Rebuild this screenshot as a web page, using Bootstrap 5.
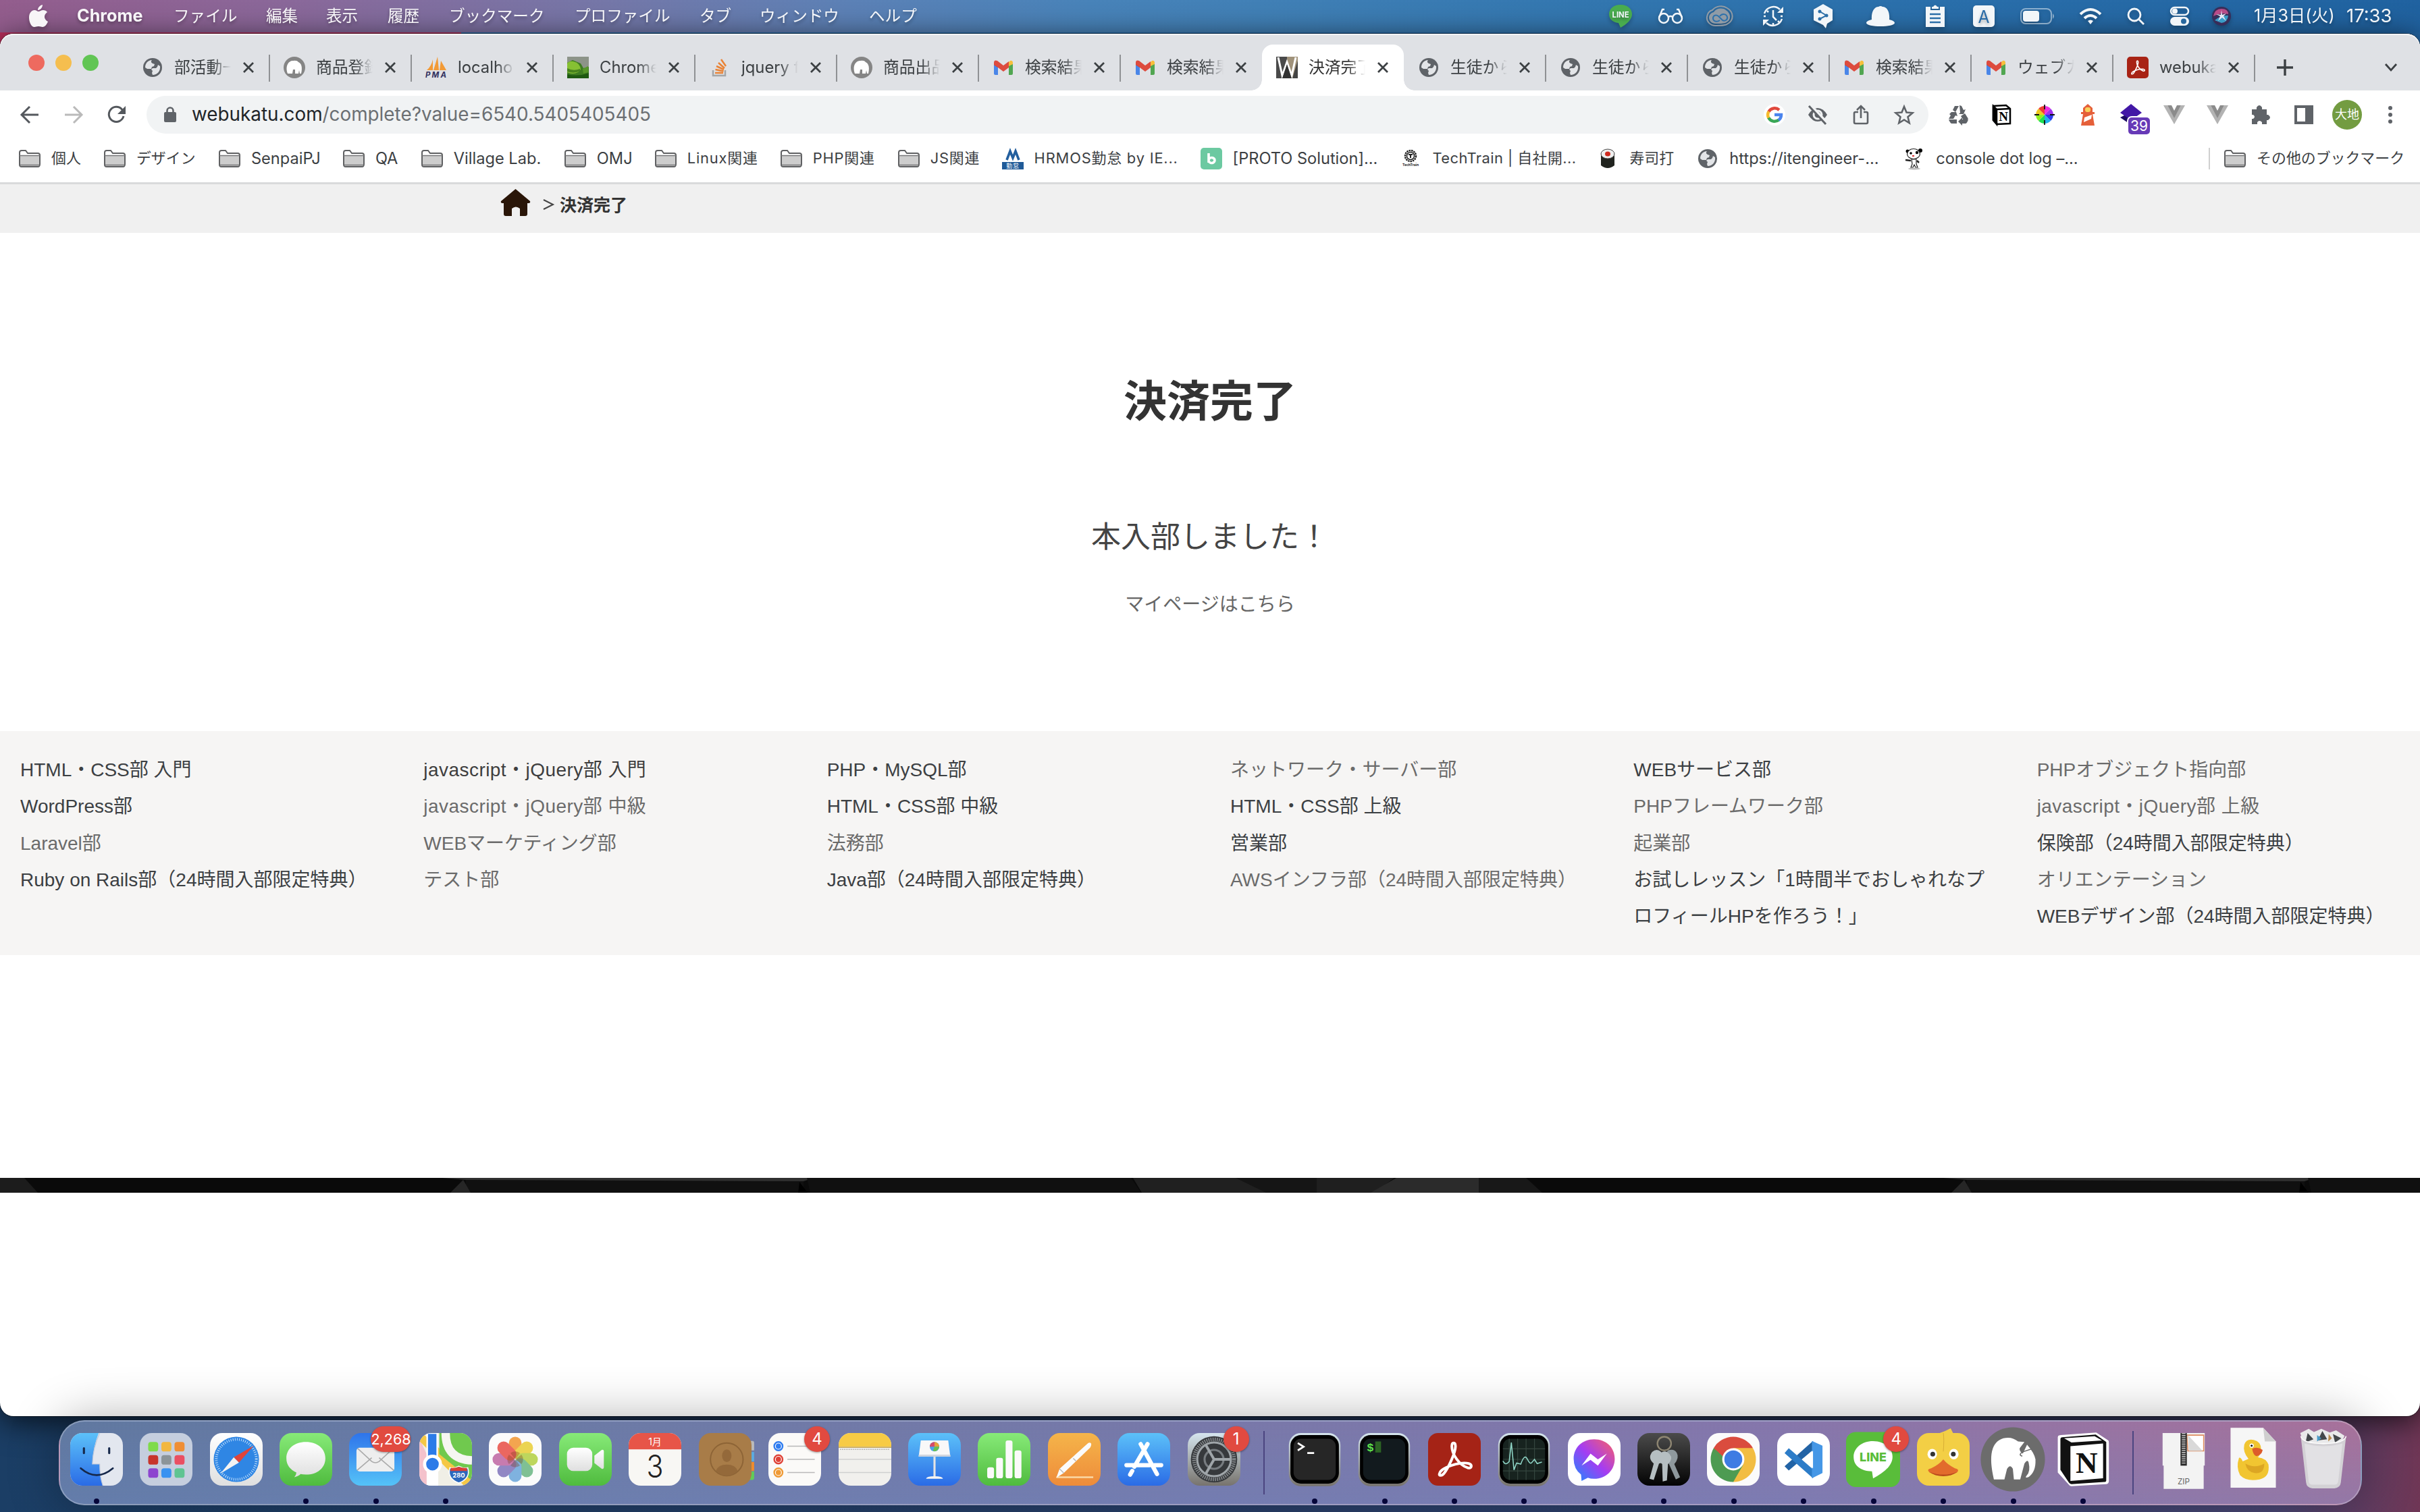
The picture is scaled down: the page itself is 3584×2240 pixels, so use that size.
<!DOCTYPE html>
<html lang="ja">
<head>
<meta charset="utf-8">
<title>決済完了</title>
<link href="https://cdn.jsdelivr.net/npm/bootstrap@5.3.0/dist/css/bootstrap.min.css" rel="stylesheet">
<style>
html,body{height:2240px;width:3584px;overflow:hidden}
body{font-family:Inter,"Noto Sans CJK JP",sans-serif;font-size:24px;line-height:1;color:#3c4043;
 background:linear-gradient(90deg,#b92f5c 0,#b92f5c 683px,#2d6ea8 683px,#2465a3) 0 0/100% 300px no-repeat,linear-gradient(90deg,#1b3e65,#26406b 40%,#31426f 75%,#4b4877 94%,#6f3655)}
svg{display:block;flex:none;overflow:visible}
.topmenu{height:48px;color:#fff;font-size:23.6px;background:linear-gradient(95deg,#935d8d 0,#8a689a 12%,#7577a8 25%,#5c81b6 35%,#4883b9 45%,#4180b6 52%,#3377b0 65%,#2a6fab 80%,#2062a0)}
.topmenu .lbl,.topmenu .ico{text-shadow:0 3px 5px #0005;white-space:nowrap;opacity:.94}
.topmenu .ico{filter:drop-shadow(0 3px 3px #0004)}
.m0{width:70px;padding-left:43px;margin-right:44px}
.m1{width:143px;font-weight:700;font-size:25.2px}.m2{width:137px}.m3{width:89px}.m4,.m5{width:91px}.m6{width:186px}.m7{width:185px}.m8{width:89px}.m9{width:162px}
.i2{margin-left:37px}.i3{margin-left:34px}.i4{margin-left:42px}.i5{margin-left:41px}.i6{margin-left:48px}.i7{margin-left:45px}.i8{margin-left:41px}.i9{margin-left:38px}.i10{margin-left:35px}.i11,.i12{margin-left:36px}.i13{margin-left:33px}.i14{margin-left:34px;width:137px;font-size:25.2px}.i15{width:109px;font-size:27.4px}
.win{height:2048px;margin-top:2px;border-radius:20px;background:#fff;box-shadow:0 0 0 1px #0006,0 8px 46px #000b}
.tabstrip{height:84px;background:#dfe1e5;border-radius:20px 20px 0 0;box-shadow:inset 0 2px #f3f4f5;padding:16px 0 0 42px}
.lights{width:147px;padding-top:15px;gap:16px}
.lights i{width:24px;height:24px;border-radius:50%}
.tb{width:210px;height:68px;padding-left:21px;position:relative;font-size:23.8px}
.tb+.tb:not(.act):not(.post)::before,.cap::before{content:"";position:absolute;left:-1px;top:15px;width:2px;height:40px;background:#8f9194}
.tb .t{width:84px;margin-left:16px;white-space:nowrap;line-height:36px;-webkit-mask-image:linear-gradient(90deg,#000 68%,transparent)}
.tb .x{margin-left:17px}
.act{background:#fff;border-radius:16px 16px 0 0;color:#333}
.act::after,.act::before{content:"";position:absolute;bottom:0;width:16px;height:16px}
.act::before{left:-16px;background:radial-gradient(circle at 0 0,transparent 15.5px,#fff 16px)}
.act::after{right:-16px;background:radial-gradient(circle at 100% 0,transparent 15.5px,#fff 16px)}
.cap{position:relative;width:245px;height:68px;padding:0 32px 0 32px}
.tools{height:72px}
.nav1{width:217px;padding-left:28px;gap:32px}
.omni{width:2639px;height:56px;border-radius:28px;background:#f1f3f4;padding:0 4px 0 26px;font-size:27.85px}
.omni .url{margin-left:23px}
.cell{width:64px}
.ext{padding-left:12px;width:728px}
.cnt{left:28px;top:20px;width:32px;height:25px;border-radius:5px;background:#673ab7;color:#fff;font-size:21px;line-height:25px;text-align:center;box-shadow:0 0 0 2px #fff}
.ava{width:44px;height:44px;border-radius:50%;background:#739c41;color:#fff;font-size:18px}
.marks{height:64px;padding-left:28px;padding-bottom:7px;font-size:21.9px}
.marks>div{gap:16px;white-space:nowrap}
.marks .la{font-size:23.6px}
.marks .mx{letter-spacing:.8px}
.marks .mx2{letter-spacing:.45px}
.b1{width:126px}.b2{width:170px}.b3{width:184px}.b4{width:116px}.b5{width:212px}.b6{width:134px}.b7{width:186px}.b8{width:174px}.b9{width:154px}.b10{width:294px}.b11{width:296px}.b12{width:292px}.b13{width:148px}.b14{width:306px}.b15{width:452px}
.b16{width:290px}
.bsep{width:2px;height:32px;background:#cfcfcf;margin-right:21px}
.page{border-top:3px solid #d9dadb;font-family:"Noto Sans CJK JP",sans-serif}
.crumb{height:72px;background:#f0f0f0;padding:0 0 13px 741px;color:#333;font-size:25px}
.crumb .home{margin-bottom:6px}
.crumb .gt{margin:0 8px 0 18px;width:17px}
.hero{height:738px;color:#333}
.hero h1{font-size:64px;font-weight:700;line-height:80px;margin:204px 0 0}
.hero p{font-size:44px;line-height:60px;color:#444;margin:133px 0 0}
.hero a{font-size:28px;line-height:40px;color:#666;margin-top:51px}
.clubs{height:332px;background:#f6f5f4;padding-top:31px;font-family:"Liberation Sans","Noto Sans CJK JP",sans-serif;font-size:28px;line-height:54.3px}
.clubs .col-2{padding:0 30px}
.clubs a{display:block;color:#3e3e3e;text-decoration:none}
.clubs a.off{color:#6b6b6b}
.clubs a.js{letter-spacing:.45px}
.band{margin-top:330px;height:22px}
.dock{height:126px;margin:6px 86px 0 86.5px;padding:17px 0 0 2.5px;border:2px solid #ffffff44;border-radius:38px;position:relative;
 background:linear-gradient(180deg,transparent,#6b86c055),linear-gradient(90deg,#6078a0,#6d7aa6 25%,#7878a9 50%,#8676ab 75%,#a8719a);box-shadow:0 0 76px #0005}
.app{width:103.45px;height:106px;position:relative}
.app.run::after{content:"";position:absolute;left:48px;bottom:1px;width:8px;height:8px;border-radius:50%;background:#06063a}
.dsep{width:45.7px}
.dsep i{display:block;width:2px;height:94px;margin:-3px auto 0;background:#4b4580}
.bdg{right:-13px;top:-10px;min-width:38px;height:38px;border-radius:19px;background:#e14a40;color:#fff;font-size:24px;line-height:38px;text-align:center;box-shadow:0 1px 3px #0006}
.bdg.wide{width:59px;right:-13px;font-size:21.5px}
</style>
<script src="https://cdn.jsdelivr.net/npm/bootstrap@5.3.0/dist/js/bootstrap.bundle.min.js"></script>
</head>
<body class="d-flex flex-column">
<svg width="0" height="0" class="position-absolute">
<defs>
<symbol id="globe" viewBox="0 0 32 32"><circle cx="16" cy="16" r="14" fill="#5f6368"/><path d="M15 5c-2 2-1 4 1 5l3 1-1 3-3 1-1 3-6 0-3-2C5 10 9 5 15 5z" fill="#e3e5e8"/><path d="M27 14c1 7-4 13-11 13l-1-3 1-3-2-2 2-2 5 0 2-2 1-3z" fill="#e3e5e8"/></symbol>
<symbol id="mamp" viewBox="0 0 32 32"><circle cx="16" cy="16" r="16" fill="#858585"/><path d="M6 25C2 14 7 6 14 6q6-1 8 2 7 3 4 17h-2l-1-5-1 5h-5v-6h-3l-1 6z" fill="#fff"/></symbol>
<symbol id="gm" viewBox="0 0 32 32"><path d="M2 8v17q0 2 2 2h4V13z" fill="#4a86e8"/><path d="M30 8v17q0 2-2 2h-4V13z" fill="#51a651"/><path d="M24 14V8l2-2q3-1 4 2v3z" fill="#f6bf3c"/><path d="M2 9v3l6 4V8z" fill="#b33026"/><path d="M2 9q0-5 5-3l9 7 8-6v9l-8 6-8-6-6-4z" fill="#dd4b3e"/></symbol>
<symbol id="fold" viewBox="0 0 32 26"><path d="M1 4q0-3 3-3h6l3 4h15q3 0 3 3v13q0 4-3 4H4q-3 0-3-3z" fill="#fff" stroke="#5f6062" stroke-width="2"/><path d="M2 9h28v13q0 2-2 2H4q-2 0-2-2z" fill="#cdcdcd"/><path d="M1 8.500h30M2 22.500h28" stroke="#77787a" stroke-width="1.500"/></symbol>
<symbol id="cls" viewBox="0 0 18 18"><path d="M2 2l14 14M16 2L2 16" stroke="#3c4043" stroke-width="2.800"/></symbol>
<symbol id="vue" viewBox="0 0 32 32"><path d="M0 2h6l10 18L26 2h6L16 30z" fill="#b3b3b3"/><path d="M6 2h6l4 8 4-8h6L16 21z" fill="#8b8b8b"/></symbol>
<symbol id="acro" viewBox="0 0 100 100"><path d="M22 76c-3 6 4 6 8 1C38 67 52 38 52 25c0-8-7-8-7 0 0 15 14 36 30 41 9 2 9-6 2-8-13-4-37 4-47 10-5 3-7 5-8 8z" fill="none" stroke="#fff" stroke-width="5"/></symbol>
<linearGradient id="gGreen" x2="0" y2="1"><stop stop-color="#87ea78"/><stop offset="1" stop-color="#4fbb3e"/></linearGradient>
<linearGradient id="gBlue" x2="0" y2="1"><stop stop-color="#5cc1f9"/><stop offset="1" stop-color="#2a6be6"/></linearGradient>
<linearGradient id="gMail" x2="0" y2="1"><stop stop-color="#2f74ea"/><stop offset="1" stop-color="#55c3f8"/></linearGradient>
<linearGradient id="gWhite" x2="0" y2="1"><stop stop-color="#fff"/><stop offset="1" stop-color="#dfdfdf"/></linearGradient>
<linearGradient id="gOr" x2="0" y2="1"><stop stop-color="#f5b54a"/><stop offset="1" stop-color="#ee8b3a"/></linearGradient>
<linearGradient id="gMsgr" x1="1" y1="0" x2="0" y2="1"><stop stop-color="#fb6164"/><stop offset=".5" stop-color="#a53cf2"/><stop offset="1" stop-color="#1a8bff"/></linearGradient>
<linearGradient id="gDark" x2="0" y2="1"><stop stop-color="#4b4b4b"/><stop offset="1" stop-color="#030303"/></linearGradient>
<linearGradient id="gRim" x2="0" y2="1"><stop stop-color="#d5e5ee"/><stop offset="1" stop-color="#77736d"/></linearGradient>
<clipPath id="sq"><rect width="100" height="100" rx="23"/></clipPath>
</defs></svg>

<header class="topmenu d-flex align-items-center flex-shrink-0">
 <div class="m0 ico"><svg width="28" height="34" viewBox="0 0 28 34"><path d="M20 0c0 4-3 8-7 8 0-4 3-7 7-8zM14 10c2 0 4-2 7-2 2 0 5 1 6 3-6 4-5 11 1 14-2 5-5 8-8 8-2 0-3-1-6-1s-4 1-6 1C3 33 0 25 0 19 0 12 4 8 8 8c3 0 4 2 6 2z" fill="#fff"/></svg></div>
 <div class="m1 lbl">Chrome</div><div class="m2 lbl">ファイル</div><div class="m3 lbl">編集</div><div class="m4 lbl">表示</div><div class="m5 lbl">履歴</div><div class="m6 lbl">ブックマーク</div><div class="m7 lbl">プロファイル</div><div class="m8 lbl">タブ</div><div class="m9 lbl">ウィンドウ</div><div class="lbl">ヘルプ</div>
 <div class="d-flex align-items-center ms-auto">
 <svg class="ico" width="36" height="34" viewBox="0 0 36 34"><path d="M18 34l-3-7C6 26 1 21 1 14 1 6 8 0 18 0s17 6 17 14c0 8-8 15-17 20z" fill="#4bb04a"/><text x="18" y="19" font-size="12" font-weight="700" fill="#fff" text-anchor="middle" textLength="25" lengthAdjust="spacingAndGlyphs">LINE</text></svg>
 <svg class="ico i2" width="38" height="24" viewBox="0 0 38 24" fill="none" stroke="#fff" stroke-width="2.500"><circle cx="9" cy="15" r="7"/><circle cx="29" cy="15" r="7"/><path d="M16 13q3-2 6 0M2 14L7 2h3M36 14L31 2h-3"/></svg>
 <svg class="ico i3" width="40" height="30" viewBox="0 0 40 30"><path d="M14 29C6 29 0 23 1 16 2 10 5 7 9 6c5-6 15-8 22-3 10 6 10 18 1 23-3 3-9 3-18 3z" fill="none" stroke="#979ea6" stroke-width="2"/><path d="M14 26C8 26 4 22 4 17c0-4 3-7 7-8 4-6 13-7 18-3 8 5 8 15 1 18-3 2-8 2-16 2z" fill="#979ea6"/><path d="M20 21c-4 3-10 2-10-3 0-4 4-6 8-3l6 6c4 2 8-1 7-5s-7-6-11-1" fill="none" stroke="#2e72ac" stroke-width="2"/></svg>
 <svg class="ico i4" width="34" height="34" viewBox="0 0 34 34" fill="none" stroke="#fff" stroke-width="2.500"><path d="M4 13A14 14 0 0 1 27 7M30 21A14 14 0 0 1 7 27M17 8v10l5 5"/><path d="M32 3v9h-9zM2 31v-9h9z" fill="#fff" stroke="none"/><path d="M3 17h3M28 17h3M17 27v3M8 9l2 2M24 24l2 2"/></svg>
 <svg class="ico i5" width="32" height="38" viewBox="0 0 32 38"><path d="M16 1l14 8v16l-8 5-2 7-4-5L2 25V9z" fill="#fff"/><path d="M11 12l10 6-10 5" stroke="#2d70a9" stroke-width="2" fill="none"/><circle cx="11" cy="12" r="2.500" fill="#2d70a9"/><circle cx="21" cy="18" r="2.500" fill="#2d70a9"/><circle cx="11" cy="23" r="2.500" fill="#2d70a9"/></svg>
 <svg class="ico i6" width="42" height="30" viewBox="0 0 42 30"><path d="M8 20C7 8 12 1 18 1q3-2 6 0c7 0 11 8 10 19 5 1 8 3 8 5 0 3-10 5-21 5S0 28 0 25c0-2 3-4 8-5z" fill="#fff"/></svg>
 <svg class="ico i7" width="30" height="34" viewBox="0 0 30 34"><path d="M1 3h7v5h14V3h7v30H1z" fill="#fff"/><path d="M10 3h2q3-5 6 0h2v3H10z" fill="#fff"/><path d="M7 14h16M7 20h16M7 26h16" stroke="#2d70a9" stroke-width="2.500"/></svg>
 <svg class="ico i8" width="32" height="32" viewBox="0 0 32 32"><rect width="32" height="32" rx="5" fill="#fff"/><text x="16" y="25.500" font-size="26" fill="#2a6ca8" text-anchor="middle" textLength="17" lengthAdjust="spacingAndGlyphs">A</text></svg>
 <svg class="ico i9" width="52" height="24" viewBox="0 0 52 24"><rect x="1" y="1" width="45" height="22" rx="7" fill="none" stroke="#fff" stroke-opacity=".5" stroke-width="2"/><rect x="4" y="4" width="24" height="16" rx="4" fill="#fff"/><path d="M48 8q4 4 0 8z" fill="#fff" opacity=".5"/></svg>
 <svg class="ico i10" width="34" height="25" viewBox="0 0 34 25" fill="none" stroke="#fff" stroke-width="4"><path d="M2 9Q17-5 32 9M8 15q9-8 18 0"/><path d="M17 24l-4-5q4-3 8 0z" fill="#fff" stroke="none"/></svg>
 <svg class="ico i11" width="28" height="26" viewBox="0 0 28 26" fill="none" stroke="#fff" stroke-width="2.800"><circle cx="12" cy="11" r="9"/><path d="M19 18l7 7"/></svg>
 <svg class="ico i12" width="30" height="28" viewBox="0 0 30 28"><rect x="2" y="1" width="26" height="11" rx="5.500" fill="none" stroke="#fff" stroke-width="2.500"/><circle cx="8" cy="6.500" r="4" fill="#fff"/><rect x="1" y="15" width="28" height="13" rx="6.500" fill="#fff"/><circle cx="21" cy="21.500" r="4" fill="#28689f"/></svg>
 <svg class="ico i13" width="28" height="28" viewBox="0 0 28 28"><circle cx="14" cy="14" r="14" fill="#3a2a55"/><path d="M2 14Q4 3 14 3t10 8Q14 8 2 14z" fill="#c24a87"/><path d="M4 20q9-8 20-7-1 10-10 11z" fill="#3c9fcb"/><path d="M14 5l1 7 6-2-4 4 4 7-6-5-6 5 3-7-6-3 7 1z" fill="#f2f0fb"/></svg>
 <div class="lbl i14">1月3日(火)</div><div class="lbl i15">17:33</div>
 </div>
</header>

<main class="win flex-shrink-0">
 <div class="tabstrip d-flex">
  <div class="lights d-flex"><i style="background:#ee6a5f"></i><i style="background:#f5be4f"></i><i style="background:#61c554"></i></div>
  <div class="tb d-flex align-items-center"><svg width="32" height="32"><use href="#globe"/></svg><span class="t">部活動一</span><svg class="x" width="18" height="18"><use href="#cls"/></svg></div>
  <div class="tb d-flex align-items-center"><svg width="32" height="32"><use href="#mamp"/></svg><span class="t">商品登録</span><svg class="x" width="18" height="18"><use href="#cls"/></svg></div>
  <div class="tb d-flex align-items-center"><svg width="32" height="32" viewBox="0 0 32 32"><path d="M2 20Q9 14 11 4v16zM12 20L18 0l2 20zM21 20l2-14 8 14z" fill="#f29a36"/><text x="0" y="31" font-size="11.500" font-weight="700" font-style="italic" fill="#33325f" textLength="31">PMA</text></svg><span class="t">localho</span><svg class="x" width="18" height="18"><use href="#cls"/></svg></div>
  <div class="tb d-flex align-items-center"><svg width="32" height="32" viewBox="0 0 32 32"><rect width="32" height="32" fill="#3e7d22"/><path d="M0 0h32v15l-8 2-4-7L8 5 0 9z" fill="#8d9489"/><path d="M0 10q3-4 9-3 10 2 11 12l-4 4q-8 4-16 0z" fill="#86c033"/><path d="M0 17q9 5 19 1v3q-9 5-19 1z" fill="#47821f"/><path d="M23 18l8-4v9l-7 2z" fill="#57972a"/><path d="M0 26q16 4 32-2v8H0z" fill="#1f5a12"/></svg><span class="t">Chrome</span><svg class="x" width="18" height="18"><use href="#cls"/></svg></div>
  <div class="tb d-flex align-items-center"><svg width="32" height="32" viewBox="0 0 32 32"><path d="M6 20v8h18v-8" fill="none" stroke="#a4a6a8" stroke-width="2.500"/><path d="M9 24h12M9.500 19l12 2.500M11 14l11 5M14 9l9 8M18 4l7 10" stroke="#e98336" stroke-width="2.500"/></svg><span class="t">jquery f</span><svg class="x" width="18" height="18"><use href="#cls"/></svg></div>
  <div class="tb d-flex align-items-center"><svg width="32" height="32"><use href="#mamp"/></svg><span class="t">商品出品</span><svg class="x" width="18" height="18"><use href="#cls"/></svg></div>
  <div class="tb d-flex align-items-center"><svg width="32" height="32"><use href="#gm"/></svg><span class="t">検索結果</span><svg class="x" width="18" height="18"><use href="#cls"/></svg></div>
  <div class="tb d-flex align-items-center"><svg width="32" height="32"><use href="#gm"/></svg><span class="t">検索結果</span><svg class="x" width="18" height="18"><use href="#cls"/></svg></div>
  <div class="tb act d-flex align-items-center"><svg width="32" height="32" viewBox="0 0 32 32"><path d="M0 0h16v32H0z" fill="#4a4a4a"/><path d="M16 0h16v32H16z" fill="#a0927a"/><path d="M24 32l8-26v26z" fill="#444"/><path d="M3 1l6 27 7-20 7 20 6-27" fill="none" stroke="#fff" stroke-width="3"/><path d="M16 11l7 21H9z" fill="#333"/></svg><span class="t">決済完了</span><svg class="x" width="18" height="18"><use href="#cls"/></svg></div>
  <div class="tb post d-flex align-items-center"><svg width="32" height="32"><use href="#globe"/></svg><span class="t">生徒から</span><svg class="x" width="18" height="18"><use href="#cls"/></svg></div>
  <div class="tb d-flex align-items-center"><svg width="32" height="32"><use href="#globe"/></svg><span class="t">生徒から</span><svg class="x" width="18" height="18"><use href="#cls"/></svg></div>
  <div class="tb d-flex align-items-center"><svg width="32" height="32"><use href="#globe"/></svg><span class="t">生徒から</span><svg class="x" width="18" height="18"><use href="#cls"/></svg></div>
  <div class="tb d-flex align-items-center"><svg width="32" height="32"><use href="#gm"/></svg><span class="t">検索結果</span><svg class="x" width="18" height="18"><use href="#cls"/></svg></div>
  <div class="tb d-flex align-items-center"><svg width="32" height="32"><use href="#gm"/></svg><span class="t">ウェブカ</span><svg class="x" width="18" height="18"><use href="#cls"/></svg></div>
  <div class="tb d-flex align-items-center"><svg width="32" height="32" viewBox="0 0 100 100"><rect width="100" height="100" rx="16" fill="#a82315"/><use href="#acro" width="100" height="100"/></svg><span class="t">webuka</span><svg class="x" width="18" height="18"><use href="#cls"/></svg></div>
  <div class="cap d-flex align-items-center justify-content-between"><svg width="26" height="26" viewBox="0 0 26 26"><path d="M13 1v24M1 13h24" stroke="#3c4043" stroke-width="3.400"/></svg><svg width="22" height="12" viewBox="0 0 22 12"><path d="M3 1l8 9 8-9" fill="none" stroke="#3c4043" stroke-width="2.800"/></svg></div>
 </div>

 <div class="tools d-flex align-items-center">
  <div class="nav1 d-flex align-items-center">
   <svg width="32" height="32" viewBox="0 0 32 32" fill="none" stroke="#54585d" stroke-width="3"><path d="M29 16H5M16 4L4 16l12 12"/></svg>
   <svg width="32" height="32" viewBox="0 0 32 32" fill="none" stroke="#bababa" stroke-width="3"><path d="M4 16h24M17 4l12 12-12 12"/></svg>
   <svg width="32" height="32" viewBox="0 0 32 32" fill="none" stroke="#54585d" stroke-width="3"><path d="M27 18A11 11 0 1 1 24.500 8l3 3"/><path d="M30 3v12H18z" fill="#54585d" stroke="none"/></svg>
  </div>
  <div class="omni d-flex align-items-center">
   <svg width="18" height="24" viewBox="0 0 18 24"><rect y="8" width="18" height="15" rx="2" fill="#5f6368"/><path d="M4.500 9V6a4.500 4.500 0 0 1 9 0v3" fill="none" stroke="#5f6368" stroke-width="2.600"/></svg>
   <span class="url"><span class="text-dark">webukatu.com</span><span style="color:#6b6f73">/complete?value=6540.5405405405</span></span>
   <div class="d-flex ms-auto">
    <div class="cell d-flex justify-content-center"><svg width="32" height="32" viewBox="0 0 32 32"><circle cx="16" cy="16" r="16" fill="#fff"/><g fill="none" stroke-width="4.500"><path d="M23 9A10 10 0 0 0 7.500 11.500" stroke="#e0483c"/><path d="M7.500 11A10 10 0 0 0 7.500 21" stroke="#f6bb2d"/><path d="M7.300 20.500A10 10 0 0 0 22.500 23.500" stroke="#3aa757"/><path d="M22 24Q26 21 26 16H16" stroke="#4a84ee"/></g></svg></div>
    <div class="cell d-flex justify-content-center"><svg width="32" height="32" viewBox="0 0 32 32"><path d="M2 16Q8 6 16 6t14 10Q24 26 16 26T2 16z" fill="#5f6368"/><circle cx="16" cy="16" r="6" fill="none" stroke="#f1f3f4" stroke-width="3"/><path d="M5 1l25 27" stroke="#f1f3f4" stroke-width="4"/><path d="M3 3l25 27" stroke="#5f6368" stroke-width="3"/></svg></div>
    <div class="cell d-flex justify-content-center"><svg width="32" height="32" viewBox="0 0 32 32" fill="none" stroke="#5f6368" stroke-width="2.600"><path d="M12 12H8q-2 0-2 2v13q0 2 2 2h16q2 0 2-2V14q0-2-2-2h-4M16 21V3M10 9l6-6 6 6"/></svg></div>
    <div class="cell d-flex justify-content-center"><svg width="32" height="32" viewBox="0 0 32 32"><path d="M16 4l3.500 8.500 9 .8-7 6 2.200 9L16 23.500 8.300 28.300l2.200-9-7-6 9-.8z" fill="none" stroke="#5f6368" stroke-width="2.600"/></svg></div>
   </div>
  </div>
  <div class="ext d-flex align-items-center">
   <div class="cell d-flex justify-content-center"><svg width="32" height="32" viewBox="0 0 32 32" fill="#5f6368"><path d="M11 3h6l-5 9-4-3zM18 2l3 1 3 6 3-1-3 7h-7l2-2zM6 12l7 0 2 6-3-1-3 5H2l3-5-2-2zM2 23h12v6H6q-2-1-4-6zM26 14l5 8-3 2h-4l-4-6zM16 26l6-6v3h9q-2 6-4 6h-5v3z"/></svg></div>
   <div class="cell d-flex justify-content-center"><svg width="28" height="30" viewBox="0 0 28 30"><path d="M2 2l19-1 6 5v22L8 29l-6-6z" fill="#fff" stroke="#000" stroke-width="2.500"/><path d="M2 2l5 5v22l-5-6zM7 7l20-1" stroke="#000" stroke-width="2.500"/><text x="17" y="24" font-size="19" font-weight="700" font-family="Liberation Serif" text-anchor="middle">N</text></svg></div>
   <div class="cell d-flex justify-content-center"><svg width="30" height="30" viewBox="-15 -15 30 30"><path d="M0 0V-13A13 13 0 0 1 9-9z" fill="#f030e0"/><path d="M0 0L9-9A13 13 0 0 1 13 0z" fill="#a030f0"/><path d="M0 0H13A13 13 0 0 1 9 9z" fill="#2c3cf0"/><path d="M0 0L9 9A13 13 0 0 1 0 13z" fill="#20b0f0"/><path d="M0 0V13A13 13 0 0 1-9 9z" fill="#20e050"/><path d="M0 0L-9 9A13 13 0 0 1-13 0z" fill="#90f020"/><path d="M0 0H-13A13 13 0 0 1-9-9z" fill="#f0c820"/><path d="M0 0L-9-9A13 13 0 0 1 0-13z" fill="#f04030"/><path d="M0-15V-8M0 8v7M-15 0h7M8 0h7" stroke="#111" stroke-width="1.800"/></svg></div>
   <div class="cell d-flex justify-content-center"><svg width="24" height="32" viewBox="0 0 24 32"><path d="M12 0l7 6v6h3v3h-3l3 17H2l3-17H2v-3h3V6z" fill="#e5603a"/><rect x="8" y="5" width="8" height="7" rx="3" fill="#f9d25b"/><path d="M7 20l11-4-1 6-11 5z" fill="#fff"/></svg></div>
   <div class="cell d-flex justify-content-center position-relative"><svg width="32" height="32" viewBox="0 0 32 32"><path d="M0 20l16-8 12 8-12 11z" fill="#1c0b63"/><path d="M16 0l16 13-16 11L0 13z" fill="#4217a6"/></svg><span class="cnt position-absolute">39</span></div>
   <div class="cell d-flex justify-content-center"><svg width="32" height="32"><use href="#vue"/></svg></div>
   <div class="cell d-flex justify-content-center"><svg width="32" height="32"><use href="#vue"/></svg></div>
   <div class="cell d-flex justify-content-center"><svg width="32" height="32" viewBox="0 0 32 32"><path d="M3 8h7V5q4-6 8 0v3h7v8h2q6 4 0 8h-2v6h-7v-3q-4-4-7 0v3H3v-8h2q4-3 0-6H3z" fill="#5f6368"/></svg></div>
   <div class="cell d-flex justify-content-center"><svg width="28" height="28" viewBox="0 0 28 28"><path d="M0 0h28v28H0zM4 4v20h12V4z" fill="#5f6368" fill-rule="evenodd"/></svg></div>
   <div class="cell d-flex justify-content-center"><div class="ava d-flex align-items-center justify-content-center">大地</div></div>
   <div class="cell d-flex justify-content-center"><svg width="6" height="28" viewBox="0 0 6 28" fill="#5f6368"><circle cx="3" cy="4" r="3"/><circle cx="3" cy="14" r="3"/><circle cx="3" cy="24" r="3"/></svg></div>
  </div>
 </div>

 <div class="marks d-flex align-items-center">
  <div class="b1 d-flex align-items-center"><svg width="32" height="26"><use href="#fold"/></svg>個人</div>
  <div class="b2 d-flex align-items-center"><svg width="32" height="26"><use href="#fold"/></svg>デザイン</div>
  <div class="b3 la d-flex align-items-center"><svg width="32" height="26"><use href="#fold"/></svg>SenpaiPJ</div>
  <div class="b4 la d-flex align-items-center"><svg width="32" height="26"><use href="#fold"/></svg>QA</div>
  <div class="b5 la d-flex align-items-center"><svg width="32" height="26"><use href="#fold"/></svg>Village Lab.</div>
  <div class="b6 la d-flex align-items-center"><svg width="32" height="26"><use href="#fold"/></svg>OMJ</div>
  <div class="b7 mx d-flex align-items-center"><svg width="32" height="26"><use href="#fold"/></svg>Linux関連</div>
  <div class="b8 mx d-flex align-items-center"><svg width="32" height="26"><use href="#fold"/></svg>PHP関連</div>
  <div class="b9 mx d-flex align-items-center"><svg width="32" height="26"><use href="#fold"/></svg>JS関連</div>
  <div class="b10 mx d-flex align-items-center"><svg width="32" height="32" viewBox="0 0 32 32"><path d="M7 18l5-13 4 10 4-10 5 13" fill="none" stroke="#235f9e" stroke-width="3.600"/><rect y="21" width="32" height="11" fill="#1f5a98"/><text x="16" y="30" font-size="9" fill="#fff" text-anchor="middle">勤怠</text></svg>HRMOS勤怠 by IE...</div>
  <div class="b11 la d-flex align-items-center"><svg width="32" height="32" viewBox="0 0 32 32"><rect width="32" height="32" rx="5" fill="#6cc9a1"/><path d="M12 8v14M12 18a4.500 4 0 1 1 0 1" fill="none" stroke="#fff" stroke-width="3.600"/></svg>[PROTO Solution]...</div>
  <div class="b12 mx2 d-flex align-items-center"><svg width="32" height="32" viewBox="0 0 32 32"><circle cx="16" cy="12" r="8" fill="none" stroke="#222" stroke-width="2.500" stroke-dasharray="2.500 1"/><circle cx="16" cy="12" r="5.500" fill="none" stroke="#222" stroke-width="1.500"/><path d="M13 10h6M16 10v5" stroke="#222" stroke-width="2"/><text x="16" y="27" font-size="5" font-weight="700" fill="#222" text-anchor="middle" letter-spacing="0">TechTrain</text></svg>TechTrain | 自社開...</div>
  <div class="b13 d-flex align-items-center"><svg width="32" height="32" viewBox="0 0 32 32"><path d="M6 9v17q10 8 20 0V9z" fill="#21241f"/><ellipse cx="16" cy="9" rx="10" ry="7" fill="#eee" stroke="#444"/><ellipse cx="16" cy="9" rx="4" ry="3.500" fill="#cf2a1e"/></svg>寿司打</div>
  <div class="b14 la d-flex align-items-center"><svg width="32" height="32"><use href="#globe"/></svg>https://itengineer-...</div>
  <div class="b15 la d-flex align-items-center"><svg width="32" height="32" viewBox="0 0 32 32"><circle cx="6" cy="5" r="2.500"/><circle cx="25" cy="4" r="3"/><ellipse cx="15" cy="9" rx="9.500" ry="7.500" fill="#fff" stroke="#222" stroke-width="1.200"/><circle cx="11" cy="8" r="1.800"/><circle cx="20" cy="7" r="2.200"/><path d="M13 11h3v2h-3z" fill="#d33"/><path d="M12 17h7v7l2 5h-3l-2-4-2 4h-3l2-5z" fill="#fff" stroke="#222" stroke-width="1.200"/><path d="M3 18l8 1M20 19l3 3" stroke="#222" stroke-width="2.500"/><ellipse cx="16" cy="31" rx="9" ry="1.500" fill="#bbb"/></svg>console dot log –...</div>
  <div class="bsep ms-auto"></div>
  <div class="b16 d-flex align-items-center"><svg width="32" height="26"><use href="#fold"/></svg>その他のブックマーク</div>
 </div>

 <section class="page">
  <nav class="crumb d-flex align-items-center">
   <svg width="45" height="40" viewBox="0 0 45 40" class="home"><path d="M22.500 0L44 18q1 3-2 3h-2v16q0 3-3 3h-8V29q-6-5-12 0v11H8q-3 0-3-3V21H3q-3 0-2-3z" fill="#2a1608"/></svg>
   <svg class="gt" width="17" height="16" viewBox="0 0 17 16"><path d="M1 1l14 7-14 7" fill="none" stroke="#444" stroke-width="2"/></svg><b>決済完了</b>
  </nav>
  <div class="hero d-flex flex-column align-items-center">
   <h1>決済完了</h1>
   <p>本入部しました！</p>
   <a class="text-decoration-none">マイページはこちら</a>
  </div>
  <div class="clubs"><div class="row g-0">
   <div class="col-2"><a>HTML・CSS部 入門</a><a>WordPress部</a><a class="off">Laravel部</a><a>Ruby on Rails部（24時間入部限定特典）</a></div>
   <div class="col-2"><a class="js">javascript・jQuery部 入門</a><a class="off js">javascript・jQuery部 中級</a><a class="off">WEBマーケティング部</a><a class="off">テスト部</a></div>
   <div class="col-2"><a>PHP・MySQL部</a><a>HTML・CSS部 中級</a><a class="off">法務部</a><a>Java部（24時間入部限定特典）</a></div>
   <div class="col-2"><a class="off">ネットワーク・サーバー部</a><a>HTML・CSS部 上級</a><a>営業部</a><a class="off">AWSインフラ部（24時間入部限定特典）</a></div>
   <div class="col-2"><a>WEBサービス部</a><a class="off">PHPフレームワーク部</a><a class="off">起業部</a><a>お試しレッスン「1時間半でおしゃれなプロフィールHPを作ろう！」</a></div>
   <div class="col-2"><a class="off">PHPオブジェクト指向部</a><a class="off js">javascript・jQuery部 上級</a><a>保険部（24時間入部限定特典）</a><a class="off">オリエンテーション</a><a>WEBデザイン部（24時間入部限定特典）</a></div>
  </div></div>
  <div class="band"><svg width="3584" height="22" viewBox="0 0 3584 22"><rect width="3584" height="22" fill="#0a0a0a"/><path d="M0 0h36l20 22H0z" fill="#1c1c1c"/>
   <g id="seg"><path d="M690 2h500v20H690z" fill="#101010"/><path d="M655 0h550l-15 5-500-2z" fill="#303030"/><path d="M686 3l11 19h-30z" fill="#262626"/><path d="M1195 0h480l15 22h-490z" fill="#101010"/><path d="M1184 6l12 16h-14z" fill="#000"/></g>
   <path d="M1678 0h273v22h-260z" fill="#202020"/><path d="M1830 0h120v22h-75z" fill="#151515"/><path d="M1950 0h115l-30 22h-85z" fill="#1f1f1f"/><path d="M2068 0h122v22h-160z" fill="#2b2b2b"/><path d="M2190 0h70l24 22h-94z" fill="#181818"/><svg width="3584" height="22" viewBox="0 0 3584 22"><use href="#seg" x="2223"/></svg></svg></div>
 </section>
</main>

<footer class="dock d-flex flex-shrink-0">
 <div class="app run d-flex justify-content-center"><svg width="78" height="78" viewBox="0 0 100 100"><g clip-path="url(#sq)"><rect width="100" height="100" fill="#e3e7ef"/><path d="M0 0h54Q43 28 42 59h14q0 25 6 41H0z" fill="url(#gBlue)"/></g><path d="M56 0Q43 28 42 59h14q0 25 6 41" fill="none" stroke="#bfc8da" stroke-width="1.500"/><path d="M26 29v9M74 29v9" stroke="#16284a" stroke-width="4" stroke-linecap="round"/><path d="M20 67q30 26 61 0" fill="none" stroke="#16284a" stroke-width="3.500" stroke-linecap="round"/></svg></div>
 <div class="app d-flex justify-content-center"><svg width="78" height="78" viewBox="0 0 100 100"><rect width="100" height="100" rx="23" fill="#c5cede"/><rect x="16" y="17" width="19" height="18" rx="5" fill="#7fdb4a"/><rect x="41" y="17" width="19" height="18" rx="5" fill="#f2b740"/><rect x="66" y="17" width="19" height="18" rx="5" fill="#ef8e35"/><rect x="16" y="42" width="19" height="18" rx="5" fill="#c7352b"/><rect x="41" y="42" width="19" height="18" rx="5" fill="#8b9499"/><rect x="66" y="42" width="19" height="18" rx="5" fill="#ea4f63"/><rect x="16" y="67" width="19" height="18" rx="5" fill="#8d45cf"/><rect x="41" y="67" width="19" height="18" rx="5" fill="#3892f1"/><rect x="66" y="67" width="19" height="18" rx="5" fill="#5fc492"/></svg></div>
 <div class="app d-flex justify-content-center"><svg width="78" height="78" viewBox="0 0 100 100"><rect width="100" height="100" rx="23" fill="url(#gWhite)"/><circle cx="50" cy="50" r="43" fill="#2f86e4"/><circle cx="50" cy="50" r="38" fill="none" stroke="#cfe6fb" stroke-width="5" stroke-dasharray="1.200 2.800"/><path d="M83 24L55 56 45 46z" fill="#e0443a"/><path d="M20 77l25-31 10 10z" fill="#f3f3f3"/></svg></div>
 <div class="app run d-flex justify-content-center"><svg width="78" height="78" viewBox="0 0 100 100"><rect width="100" height="100" rx="23" fill="url(#gGreen)"/><path d="M50 17c22 0 37 13 37 31S72 79 50 79q-6 0-10-1-4 4-12 6 4-5 4-9Q13 66 13 48c0-18 15-31 37-31z" fill="url(#gWhite)"/></svg></div>
 <div class="app run d-flex justify-content-center"><div class="position-relative"><svg width="78" height="78" viewBox="0 0 100 100"><rect width="100" height="100" rx="23" fill="url(#gMail)"/><rect x="14" y="28" width="72" height="45" rx="6" fill="#eee"/><path d="M15 71l28-24M85 71L57 47M16 29l27 25q7 5 14 0l27-25" fill="none" stroke="#aaa" stroke-width="2"/></svg><span class="bdg wide position-absolute">2,268</span></div></div>
 <div class="app run d-flex justify-content-center"><svg width="78" height="78" viewBox="0 0 100 100"><g clip-path="url(#sq)"><rect width="100" height="100" fill="#f0efe6"/><path d="M0 10l14 30v60H0z" fill="#f4c2cc"/><path d="M0 15l85 85h15V85L0-5z" fill="#f5c845"/><path d="M38 0h62v90L38 40z" fill="#70c94e"/><path d="M50 0q0 50 50 52" fill="none" stroke="#f6f6f1" stroke-width="16"/><path d="M14 50h22v50H14z" fill="#fff"/><path d="M15 0h19v60H15z" fill="#2c7be8" stroke="#fff" stroke-width="3"/></g><circle cx="25" cy="59" r="15" fill="#2c7be8" stroke="#fff" stroke-width="6"/><path d="M58 66q8 2 17-3 9 5 17 3 6 20-17 29-23-9-17-29z" fill="#2b68bd" stroke="#fff" stroke-width="2"/><path d="M60 66q7 1 15-2 8 3 15 2l1 6H59z" fill="#d94138"/><text x="75" y="85" font-size="12" font-weight="700" fill="#fff" text-anchor="middle">280</text></svg></div>
 <div class="app d-flex justify-content-center"><svg width="78" height="78" viewBox="0 0 100 100"><rect width="100" height="100" rx="23" fill="#fbfbfb"/><g opacity=".88"><rect x="38" y="7" width="24" height="41" rx="12" fill="#f29a38"/><rect x="38" y="7" width="24" height="41" rx="12" fill="#e9cf3b" transform="rotate(45 50 50)"/><rect x="38" y="7" width="24" height="41" rx="12" fill="#b5d148" transform="rotate(90 50 50)"/><rect x="38" y="7" width="24" height="41" rx="12" fill="#6fb886" transform="rotate(135 50 50)"/><rect x="38" y="7" width="24" height="41" rx="12" fill="#6ea8dc" transform="rotate(180 50 50)"/><rect x="38" y="7" width="24" height="41" rx="12" fill="#8378bd" transform="rotate(225 50 50)"/><rect x="38" y="7" width="24" height="41" rx="12" fill="#c06aa5" transform="rotate(270 50 50)"/><rect x="38" y="7" width="24" height="41" rx="12" fill="#e9534b" transform="rotate(315 50 50)"/></g><path d="M50 50L41 38q9-6 18 0zM50 50l12-9q6 9 0 18zM50 50l9 12q-9 6-18 0zM50 50l-12 9q-6-9 0-18z" fill="#7a3d20" opacity=".35"/></svg></div>
 <div class="app d-flex justify-content-center"><svg width="78" height="78" viewBox="0 0 100 100"><rect width="100" height="100" rx="23" fill="url(#gGreen)"/><rect x="15" y="28" width="48" height="44" rx="12" fill="url(#gWhite)"/><path d="M67 43l14-11q4-1 4 3v30q0 4-4 3L67 57z" fill="url(#gWhite)"/></svg></div>
 <div class="app d-flex justify-content-center"><svg width="78" height="78" viewBox="0 0 100 100"><g clip-path="url(#sq)"><rect width="100" height="100" fill="#f8f7f4"/><rect width="100" height="31" fill="#e75548"/></g><text x="50" y="23" font-size="18" fill="#fff" text-anchor="middle">1月</text><text x="50" y="85" font-size="60" font-weight="300" fill="#222" text-anchor="middle" textLength="32" lengthAdjust="spacingAndGlyphs">3</text></svg></div>
 <div class="app d-flex justify-content-center"><svg width="78" height="78" viewBox="0 0 100 100"><path d="M90 15h12q3 0 3 4v14H90z" fill="#bbb"/><path d="M90 36h15v18H90z" fill="#5cabe0"/><path d="M90 55h15v17H90z" fill="#f08c2e"/><path d="M90 73h15v12q0 4-3 4H90z" fill="#61cc58"/><rect width="100" height="100" rx="23" fill="#a87c48"/><circle cx="53" cy="50" r="31" fill="none" stroke="#8d6436" stroke-width="2.500"/><ellipse cx="53" cy="43" rx="9" ry="12" fill="#94693a"/><path d="M32 72q5-12 21-12t21 12q-21 18-42 0z" fill="#94693a"/></svg></div>
 <div class="app d-flex justify-content-center"><div class="position-relative"><svg width="78" height="78" viewBox="0 0 100 100"><rect width="100" height="100" rx="23" fill="#fbfaf8"/><g fill="#fff" stroke-width="3"><circle cx="19" cy="25" r="8" stroke="#2f7cf0"/><circle cx="19" cy="50" r="8" stroke="#df4237"/><circle cx="19" cy="75" r="8" stroke="#ef9a35"/></g><circle cx="19" cy="25" r="5" fill="#2f7cf0"/><circle cx="19" cy="50" r="5" fill="#df4237"/><circle cx="19" cy="75" r="5" fill="#ef9a35"/><path d="M36 25h52M36 50h52M36 75h52" stroke="#b9b9b9" stroke-width="2"/></svg><span class="bdg position-absolute">4</span></div></div>
 <div class="app d-flex justify-content-center"><svg width="78" height="78" viewBox="0 0 100 100"><g clip-path="url(#sq)"><rect width="100" height="100" fill="#f1f0ed"/><rect width="100" height="26" fill="#f7cb45"/><path d="M0 27h100" stroke="#b8912e" stroke-width="1.500"/></g><path d="M3 31h94" stroke="#999" stroke-width="2" stroke-dasharray="1.500 2"/><path d="M0 50h100M0 75h100" stroke="#cfcfcf" stroke-width="2"/></svg></div>
 <div class="app d-flex justify-content-center"><svg width="78" height="78" viewBox="0 0 100 100"><rect width="100" height="100" rx="23" fill="url(#gBlue)"/><path d="M24 14h52l4 31H20z" fill="#f8f8f8"/><path d="M20 41h60v4H20z" fill="#cfd5de"/><circle cx="50" cy="26" r="9" fill="#4aa3ec"/><path d="M50 26V17a9 9 0 0 1 9 9z" fill="#e9a13a"/><path d="M50 26h9a9 9 0 0 1-12 8z" fill="#6bc04e"/><path d="M50 26l-9 0a9 9 0 0 1 9-9z" fill="#d34b6b"/><path d="M48 45h4v38h-4z" fill="#e4e4e4"/><path d="M34 87q0-5 16-5t16 5z" fill="#f4f4f4"/></svg></div>
 <div class="app d-flex justify-content-center"><svg width="78" height="78" viewBox="0 0 100 100"><rect width="100" height="100" rx="23" fill="url(#gGreen)"/><g fill="#fafafa"><rect x="18" y="65" width="13" height="21" rx="4"/><rect x="35" y="47" width="13" height="39" rx="4"/><rect x="53" y="14" width="13" height="72" rx="4"/><rect x="70" y="33" width="13" height="53" rx="4"/></g></svg></div>
 <div class="app d-flex justify-content-center"><svg width="78" height="78" viewBox="0 0 100 100"><rect width="100" height="100" rx="23" fill="url(#gOr)"/><path d="M16 84h70" stroke="#fbd9a6" stroke-width="3"/><path d="M74 21q5-5 8-1 1 3-2 8L30 76l-14 9 6-17z" fill="#fbfbfb"/><path d="M22 68l8 8M48 48l5 5" stroke="#bbb" stroke-width="2"/></svg></div>
 <div class="app d-flex justify-content-center"><svg width="78" height="78" viewBox="0 0 100 100"><rect width="100" height="100" rx="23" fill="url(#gBlue)"/><path d="M44 21l31 57M57 21L32 64M28 72l-4 7M17 61h44M70 61h13" stroke="#fff" stroke-width="8" stroke-linecap="round"/></svg></div>
 <div class="app d-flex justify-content-center"><div class="position-relative"><svg width="78" height="78" viewBox="0 0 100 100"><rect width="100" height="100" rx="23" fill="url(#gRim)"/><circle cx="50" cy="50" r="44" fill="#36393c"/><circle cx="50" cy="50" r="38" fill="none" stroke="#85898c" stroke-width="7" stroke-dasharray="2 2"/><circle cx="50" cy="50" r="32" fill="none" stroke="#9fa5a9" stroke-width="4"/><circle cx="50" cy="50" r="18" fill="none" stroke="#777c80" stroke-width="4"/><path d="M50 50h32M50 50L34 22M50 50L34 78" stroke="#9fa5a9" stroke-width="5"/></svg><span class="bdg position-absolute">1</span></div></div>
 <div class="dsep"><i></i></div>
 <div class="app run d-flex justify-content-center"><svg width="78" height="78" viewBox="0 0 100 100"><rect x="1" width="98" height="101" rx="23" fill="url(#gRim)"/><rect x="4" y="4" width="92" height="92" rx="20" fill="#000"/><rect x="10" y="11" width="80" height="78" rx="14" fill="#262626"/><path d="M18 19l11 7-11 7M36 38h13" stroke="#fff" stroke-width="3.500" fill="none"/></svg></div>
 <div class="app run d-flex justify-content-center"><svg width="78" height="78" viewBox="0 0 100 100"><rect x="1" width="98" height="101" rx="23" fill="url(#gRim)"/><rect x="4" y="4" width="92" height="92" rx="20" fill="#000"/><rect x="10" y="11" width="80" height="78" rx="14" fill="#121a1e"/><text x="17" y="35" font-size="22" font-family="Liberation Mono" font-weight="700" fill="#5ee34c">$</text><rect x="33" y="16" width="11" height="21" fill="#2c6424"/></svg></div>
 <div class="app run d-flex justify-content-center"><svg width="80" height="78" viewBox="0 0 100 100"><rect width="100" height="100" rx="19" fill="#a52316"/><use href="#acro" width="100" height="100"/></svg></div>
 <div class="app run d-flex justify-content-center"><svg width="78" height="78" viewBox="0 0 100 100"><rect x="1" width="98" height="101" rx="23" fill="url(#gRim)"/><rect x="4" y="4" width="92" height="92" rx="20" fill="#000"/><rect x="10" y="11" width="80" height="78" rx="14" fill="#17231f"/><path d="M10 30h80M10 50h80M10 72h80M22 11v78M38 11v78M54 11v78M70 11v78" stroke="#35463f" stroke-width="1.500"/><path d="M10 53q4 8 9 4l3-3 4-36 5 52 5-13 8 2q7-20 12-10t8 8l6-7 5 8 9-3" fill="none" stroke="#8fd6c7" stroke-width="2"/></svg></div>
 <div class="app run d-flex justify-content-center"><svg width="78" height="78" viewBox="0 0 100 100"><rect width="100" height="100" rx="23" fill="#fff"/><path d="M50 12c23 0 39 16 39 37S73 87 50 87q-7 0-12-2l-12 6-1-12q-14-11-14-30c0-21 16-37 39-37z" fill="url(#gMsgr)"/><path d="M26 62l17-23 14 11 17-11-17 23-14-11z" fill="#fff"/></svg></div>
 <div class="app run d-flex justify-content-center"><svg width="78" height="78" viewBox="0 0 100 100"><rect width="100" height="100" rx="23" fill="url(#gDark)"/><circle cx="51" cy="20" r="13" fill="none" stroke="#8e8672" stroke-width="3"/><g fill="#b6bfc2"><path d="M28 36q9-8 17 0t3 20l-7 2-10 31-8-2 8-29q-12-10-3-22z"/><path d="M58 33q12-4 17 5t-5 21l11 25-8 4-13-29q-12-15-2-26z" fill="#8f999d"/><path d="M44 38q9-7 17 2t-3 19l-2 31-8 2-1-33q-12-10-3-21z"/></g></svg></div>
 <div class="app run d-flex justify-content-center"><svg width="78" height="78" viewBox="0 0 100 100"><rect width="100" height="100" rx="23" fill="#fbfbfb"/><path d="M50 50L12.800 28.500A43 43 0 0 1 87.200 28.500z" fill="#da4c3e"/><path d="M50 50H50L87.200 28.500A43 43 0 0 1 50 93z" fill="#f2bd42"/><path d="M50 50L50 93A43 43 0 0 1 12.800 28.500z" fill="#4d9b52"/><path d="M50 28.500h37.200L68.600 60.700z" fill="#f2bd42"/><path d="M31.400 60.700L12.800 28.500 50 28.500z" fill="#da4c3e"/><path d="M31.400 60.700L12.800 28.500 34 48z" fill="#4d9b52"/><path d="M68.600 60.700L50 93 40 68z" fill="#4d9b52"/><circle cx="50" cy="50" r="21" fill="#fff"/><circle cx="50" cy="50" r="17" fill="#3e7ce3"/></svg></div>
 <div class="app run d-flex justify-content-center"><svg width="78" height="78" viewBox="0 0 100 100"><rect width="100" height="100" rx="23" fill="#fff"/><path d="M14 63l8 8L68 32V15z" fill="#2263a5"/><path d="M14 38l8-9 46 40v17z" fill="#2c7cc8"/><path d="M66 15l20 9v52l-20 10z" fill="#4597e6"/><path d="M68 34v33L47 50z" fill="#fff"/></svg></div>
 <div class="app run d-flex justify-content-center"><div class="position-relative"><svg width="80" height="80" viewBox="0 0 100 100"><rect y="-2" width="100" height="102" rx="18" fill="#59bd3a"/><path d="M50 84l-2-13C26 70 14 60 14 44 14 28 29 15 50 15s36 13 36 29c0 16-15 29-36 40z" fill="#fff"/><text x="50" y="53" font-size="22" font-weight="800" fill="#59bd3a" text-anchor="middle" textLength="50" lengthAdjust="spacingAndGlyphs">LINE</text></svg><span class="bdg position-absolute">4</span></div></div>
 <div class="app run d-flex justify-content-center"><svg width="78" height="78" viewBox="0 0 100 100"><rect width="100" height="100" rx="23" fill="#f3cf45"/><path d="M24 4q20-2 40-13l8 16z" fill="#f3cf45"/><path d="M50 0q2 12 0 35" stroke="#cfa430" fill="none"/><ellipse cx="29" cy="40" rx="9" ry="10" fill="#fff"/><ellipse cx="70" cy="40" rx="9" ry="10" fill="#fff"/><circle cx="30" cy="40" r="4.500" fill="#333"/><circle cx="69" cy="40" r="4.500" fill="#333"/><path d="M50 50q8 10 22 17 10 2 4 8-12 6-26 6t-26-6q-7-6 3-8 15-7 23-17z" fill="#e26b2c"/><path d="M24 74q26 10 52 0-10 8-26 8t-26-8z" fill="#b84a1c"/></svg></div>
 <div class="app run d-flex justify-content-center"><svg width="78" height="78" viewBox="0 0 100 100"><circle cx="50" cy="50" r="61" fill="#6c6c6c"/><path d="M14 88Q-2 20 32 10q16-4 28 6l12 1-9 12q-1 6 6 10l8-17q14 16 16 28 1 25-14 34-7 2-3-3 8-8 4-25-2-7-8 2l-8 30H52l-2-20q-5-10-11 0l-5 20z" fill="#fff"/><path d="M86 30l-18 6q-8 6 0 8" fill="none" stroke="#6c6c6c" stroke-width="2"/></svg></div>
 <div class="app run d-flex justify-content-center"><svg width="78" height="78" viewBox="0 0 100 100"><path d="M2 8Q2 4 8 4L75-1 98 14q1 1 1 5v72q0 6-6 6L28 101q-3 0-5-3L2 75z" fill="#fff"/><path d="M7 12q0-4 4-4l63-5 20 14v73q0 3-4 3l-62 4q-3 0-5-3L7 70z" fill="#111"/><path d="M26 25l62-5v66l-62 5z" fill="#fff"/><path d="M14 10l58-4 14 8-58 4z" fill="#fff"/><text x="57" y="76" font-size="58" font-weight="700" font-family="Liberation Serif" text-anchor="middle" fill="#111">N</text></svg></div>
 <div class="dsep"><i></i></div>
 <div class="app d-flex justify-content-center"><svg width="78" height="78" viewBox="0 0 100 100"><path d="M10 0h80v62h-2v44H12V62h-2z" fill="#f3f3f3"/><path d="M56 4h32v30H58z" fill="#fff" stroke="#dd8b5e" stroke-width="2"/><path d="M58 4l28 30H60z" fill="#d9d9d9"/><path d="M50 0v62" stroke="#2c2c2c" stroke-width="12"/><path d="M50 0v58" stroke="#bdbdbd" stroke-width="7" stroke-dasharray="2 2"/><text x="50" y="98" font-size="15" fill="#666" text-anchor="middle">ZIP</text></svg></div>
 <div class="app d-flex justify-content-center"><svg width="78" height="78" viewBox="0 0 100 100"><path d="M7-10h62l24 26v88H7z" fill="#f6f6f6"/><path d="M69-10l24 26H72z" fill="#cfcfcf"/><path d="M33 22q4-12 18-9 14 3 14 18 0 8-6 15 16 2 20 14 3 24-17 28-24 5-37-8-8-15-2-33 4-1 7 7l11-5q-11-13-8-27z" fill="#f1c531"/><path d="M48 30q8-5 20 2-2 10-12 12-6-2-8-14z" fill="#dd5b2a"/><circle cx="47" cy="24" r="4" fill="#fff"/><circle cx="47" cy="24" r="2" fill="#111"/><path d="M35 58q18 10 36 0 0 20-18 18-15-2-18-18z" fill="#dca623"/></svg></div>
 <div class="app d-flex justify-content-center"><svg width="78" height="78" viewBox="0 0 100 100"><path d="M6 0l16-8 10 6 14-6 16 7 12-4 16 10-8 20H14z" fill="#e9e9ea"/><path d="M20 0l11 12-15 6zM48-4l9 16-18 2zM68 2l16 8-12 8z" fill="#43474b"/><path d="M38 4l8 6-8 6z" fill="#4b9ac7"/><path d="M60 2l6 8-7 6z" fill="#b98b4c"/><path d="M7 6l10 88q1 10 12 11h42q11-1 12-11L93 6Q86 20 50 20T7 6z" fill="#d3d1d5"/><path d="M14 20l8 72q1 6 7 6h42q6 0 7-6l8-72q-36 10-72 0z" fill="#e2e1e4"/><path d="M7 6Q10 20 50 20T93 6" fill="none" stroke="#fff" stroke-width="2"/></svg></div>
</footer>
</body>
</html>
